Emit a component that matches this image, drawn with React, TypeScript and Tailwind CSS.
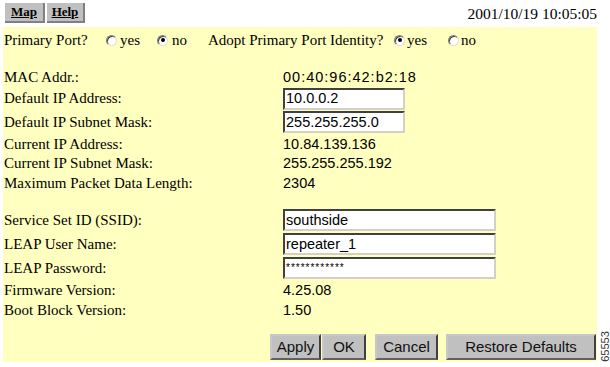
import React from "react";

const serif = { fontFamily: '"Liberation Serif", "Times New Roman", serif' };
const sans = { fontFamily: '"Liberation Sans", Arial, sans-serif' };

function Radio({ checked }: { checked?: boolean }) {
  return (
    <span className="shrink-0 inline-flex items-center justify-center w-[11px] h-[11px] rounded-full bg-white border border-t-[#808080] border-l-[#808080] border-r-[#e0e0e0] border-b-[#e0e0e0] shadow-[inset_1px_1px_0_#404040]">
      {checked && <span className="w-[4px] h-[4px] rounded-full bg-black" />}
    </span>
  );
}

export default function App() {
  return (
    <div className="w-[610px] h-[367px] bg-white relative text-black overflow-hidden">
      <div className="flex items-start justify-between pl-[5px] pr-[13px] pt-[3px] h-[27px]">
        <div className="flex gap-[2px]" style={serif}>
          <div className="w-[40px] h-[20px] bg-[#c0c0c0] border-r-2 border-b-2 border-[#808080] flex items-center justify-center text-[13px] font-bold underline">Map</div>
          <div className="w-[38px] h-[20px] bg-[#c0c0c0] border-r-2 border-b-2 border-[#808080] flex items-center justify-center text-[13px] font-bold underline">Help</div>
        </div>
        <div className="pt-[3px] text-[15.5px] leading-none" style={serif}>2001/10/19 10:05:05</div>
      </div>

      <div className="ml-[3px] w-[594px] h-[335px] bg-[#ffffc0] flex flex-col pl-[1px]">
        <div className="flex items-center h-[26px] text-[15px]" style={serif}>
          <span className="w-[102px]">Primary Port?</span>
          <Radio />
          <span className="ml-[3px] w-[37px]">yes</span>
          <Radio checked />
          <span className="ml-[4px] w-[36px]">no</span>
          <span className="w-[186px]">Adopt Primary Port Identity?</span>
          <Radio checked />
          <span className="ml-[2px] w-[41px]">yes</span>
          <Radio />
          <span className="ml-[2px]">no</span>
        </div>
        <div className="h-[14px]" />
        <Row label="MAC Addr.:" h="h-[20px]"><span className="tracking-[1px]">00:40:96:42:b2:18</span></Row>
        <Row label="Default IP Address:" h="h-[23px]"><TextBox value="10.0.0.2" w="w-[122px]" /></Row>
        <Row label="Default IP Subnet Mask:" h="h-[24px]"><TextBox value="255.255.255.0" w="w-[122px]" /></Row>
        <Row label="Current IP Address:" h="h-[20px]">10.84.139.136</Row>
        <Row label="Current IP Subnet Mask:" h="h-[19px]">255.255.255.192</Row>
        <Row label="Maximum Packet Data Length:" h="h-[20px]">2304</Row>
        <div className="h-[15px]" />
        <Row label="Service Set ID (SSID):" h="h-[24px]"><TextBox value="southside" w="w-[213px]" /></Row>
        <Row label="LEAP User Name:" h="h-[24px]"><TextBox value="repeater_1" w="w-[213px]" /></Row>
        <Row label="LEAP Password:" h="h-[24px]"><TextBox value="************" w="w-[213px]" password /></Row>
        <Row label="Firmware Version:" h="h-[21px]">4.25.08</Row>
        <Row label="Boot Block Version:" h="h-[19px]">1.50</Row>
        <div className="flex-1" />
        <div className="flex items-center justify-end pr-[1px] pb-[2px]">
          <Btn label="Apply" w="w-[51px]" />
          <Btn label="OK" w="w-[44px] ml-[1px]" />
          <Btn label="Cancel" w="w-[63px] ml-[9px]" />
          <Btn label="Restore Defaults" w="w-[150px] ml-[8px]" />
        </div>
      </div>

      <div
        className="absolute left-[590px] top-[341px] -rotate-90 text-[11px] leading-none text-[#333]"
        style={sans}
      >
        65553
      </div>
    </div>
  );
}

function TextBox({ value, w, password }: { value: string; w: string; password?: boolean }) {
  return (
    <div
      className={`${w} h-[22px] bg-white border-2 border-t-[#404040] border-l-[#404040] border-r-[#d4d0c8] border-b-[#d4d0c8] flex items-center pl-[1px] text-[14.5px] text-black`}
      style={sans}
    >
      {password ? <span className="text-[10px] tracking-[1px] leading-none">{value}</span> : value}
    </div>
  );
}

function Row({ label, h, children }: { label: string; h: string; children?: React.ReactNode }) {
  return (
    <div className={`flex items-center ${h}`}>
      <div className="w-[279px] shrink-0 text-[15px] leading-none" style={serif}>{label}</div>
      <div className="text-[14.5px] leading-none" style={sans}>{children}</div>
    </div>
  );
}

function Btn({ label, w }: { label: string; w: string }) {
  return (
    <div
      className={`${w} shrink-0 h-[26px] bg-[#c0c0c0] border-2 border-t-[#c8c8c8] border-l-[#c8c8c8] border-r-[#404040] border-b-[#606060] flex items-center justify-center text-[15px] text-[#111]`}
      style={sans}
    >
      {label}
    </div>
  );
}
